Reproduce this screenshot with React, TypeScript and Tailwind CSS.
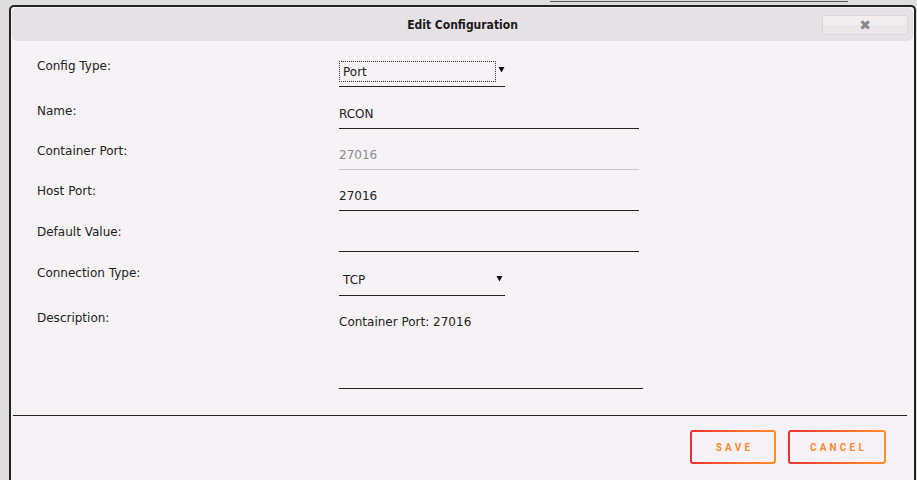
import React from "react";

const borderGradient =
  "border-2 border-transparent [background:linear-gradient(#f6f2f6,#f6f2f6)_padding-box,linear-gradient(to_right,#e8312f,#ff8f2a)_border-box]";

const Caret = () => (
  <svg width="7" height="7" viewBox="0 0 7 7" className="shrink-0">
    <path d="M0.5 1 L6.5 1 L3.5 6.5 Z" fill="#111" />
  </svg>
);

export default function App() {
  return (
    <div className="w-full h-[480px] bg-[#dedede] overflow-hidden pt-px font-['DejaVu_Sans',sans-serif] text-[12px] text-[#222]">
      {/* strip of the page under the dialog */}
      <div className="ml-[550px] w-[298px] h-px bg-[#555]" />

      <div className="ml-[9px] mt-[3px] w-[907px] h-[480px] border-2 border-b-0 border-[#222] rounded-t-[5px] bg-[#f6f2f6] p-px">
        {/* Header */}
        <div className="relative h-[33px] rounded-[5px] bg-[#e6e1e5] flex items-center justify-center">
          <span className="font-['DejaVu_Sans_Condensed','DejaVu_Sans',sans-serif] font-bold text-[12px] text-[#1a1a1a]">
            Edit Configuration
          </span>
          <button className="absolute right-[5px] top-[7px] w-[86px] h-[20px] rounded-[3px] border border-[#dcd6da] bg-[linear-gradient(#f1eef0_0%,#f1eef0_50%,#e9e5e8_52%,#ebe7ea_100%)] flex items-center justify-center">
            <span className="text-[14px] font-bold text-[#888] leading-none">✖</span>
          </button>
        </div>

        {/* Form */}
        <div className="pl-[25px] pt-[15px]">
          {/* Config Type */}
          <div className="flex">
            <div className="w-[302px] pt-[2px] leading-4">Config Type:</div>
            <div className="w-[166px] h-[31px] border-b border-[#222] pt-[5px] flex items-start">
              <div className="w-[159px] h-[21px] border border-dotted border-[#333] pl-[3px] pt-px leading-[19px]">
                Port
              </div>
              <div className="pl-[2px] pt-[5px]">
                <Caret />
              </div>
            </div>
          </div>

          {/* Name */}
          <div className="flex">
            <div className="w-[302px] pt-[16px] leading-4">Name:</div>
            <div className="w-[300px] pt-[19px] pb-[6px] leading-4 border-b border-[#222]">RCON</div>
          </div>

          {/* Container Port */}
          <div className="flex">
            <div className="w-[302px] pt-[14px] leading-4">Container Port:</div>
            <div className="w-[300px] pt-[18px] pb-[6px] leading-4 border-b border-[#c9c6c9] text-[#8a8a8a]">
              27016
            </div>
          </div>

          {/* Host Port */}
          <div className="flex">
            <div className="w-[302px] pt-[13px] leading-4">Host Port:</div>
            <div className="w-[300px] pt-[18px] pb-[6px] leading-4 border-b border-[#222]">27016</div>
          </div>

          {/* Default Value */}
          <div className="flex">
            <div className="w-[302px] pt-[13px] leading-4">Default Value:</div>
            <div className="w-[300px] h-[41px] border-b border-[#222]" />
          </div>

          {/* Connection Type */}
          <div className="flex">
            <div className="w-[302px] pt-[13px] leading-4">Connection Type:</div>
            <div className="w-[166px] pt-[20px] pb-[7px] leading-4 border-b border-[#222] flex items-center">
              <span className="flex-1 pl-[4px]">TCP</span>
              <div className="pr-[2px] -mt-[3px]">
                <Caret />
              </div>
            </div>
          </div>

          {/* Description */}
          <div className="flex">
            <div className="w-[302px] pt-[14px] leading-4">Description:</div>
            <div className="w-[304px] h-[93px] pt-[18px] leading-4 border-b border-[#222]">
              Container Port: 27016
            </div>
          </div>
        </div>

        <div className="ml-px mt-[26px] w-[894px] h-px bg-[#222]" />

        {/* Actions */}
        <div className="flex justify-end gap-[12px] pr-[27px] mt-[14px]">
          <button
            className={`w-[86px] h-[34px] rounded-[3px] ${borderGradient} font-['Roboto',sans-serif] font-bold text-[10px] tracking-[3.2px] text-[#ff8a2e] pl-[3px]`}
          >
            SAVE
          </button>
          <button
            className={`w-[98px] h-[34px] rounded-[3px] ${borderGradient} font-['Roboto',sans-serif] font-bold text-[10px] tracking-[3.2px] text-[#ff8a2e] pl-[3px]`}
          >
            CANCEL
          </button>
        </div>
      </div>
    </div>
  );
}
